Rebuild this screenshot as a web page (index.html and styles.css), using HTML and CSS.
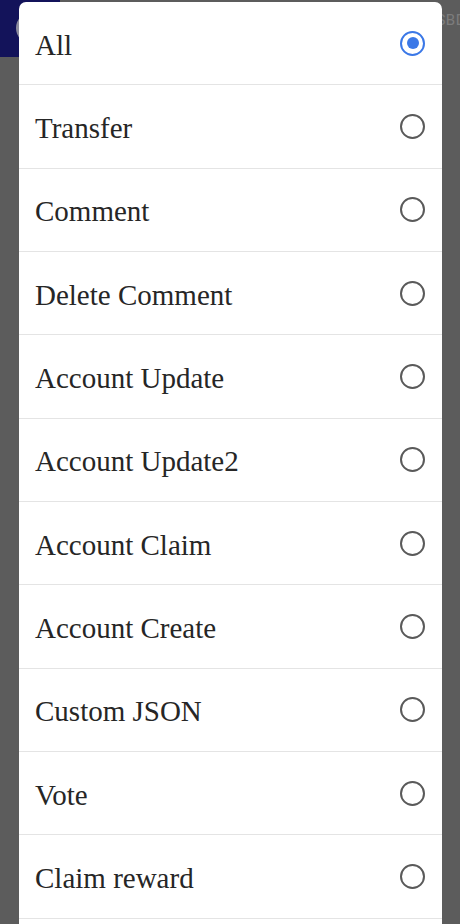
FILE: index.html
```html
<!DOCTYPE html>
<html>
<head>
<meta charset="utf-8">
<link rel="stylesheet" href="styles.css">
</head>
<body>
<header class="appbar">
  <div class="brand"><span class="avatar"></span></div>
  <span class="bal">SBD</span>
</header>
<div class="dialog">
  <div class="row"><span class="label">All</span><span class="radio on"></span></div>
  <div class="row"><span class="label">Transfer</span><span class="radio"></span></div>
  <div class="row"><span class="label">Comment</span><span class="radio"></span></div>
  <div class="row"><span class="label">Delete Comment</span><span class="radio"></span></div>
  <div class="row"><span class="label">Account Update</span><span class="radio"></span></div>
  <div class="row"><span class="label">Account Update2</span><span class="radio"></span></div>
  <div class="row"><span class="label">Account Claim</span><span class="radio"></span></div>
  <div class="row"><span class="label">Account Create</span><span class="radio"></span></div>
  <div class="row"><span class="label">Custom JSON</span><span class="radio"></span></div>
  <div class="row"><span class="label">Vote</span><span class="radio"></span></div>
  <div class="row"><span class="label">Claim reward</span><span class="radio"></span></div>
  <div class="spacer"></div>
</div>
</body>
</html>
```
FILE: styles.css
```css
html, body {
  margin: 0;
  padding: 0;
  width: 460px;
  height: 924px;
  overflow: hidden;
  background: #5c5c5c;
}
.appbar {
  height: 57px;
  display: flex;
  justify-content: space-between;
  align-items: flex-start;
  background: #5c5c5c;
}
.brand {
  width: 60px;
  height: 57px;
  background: #13135a;
  position: relative;
}
.avatar {
  position: absolute;
  left: 16px;
  top: 12px;
  width: 32px;
  height: 32px;
  border-radius: 50%;
  background: #8c8c9c;
}
.bal {
  font-family: "Roboto", "Liberation Sans", sans-serif;
  font-size: 15px;
  color: #7c7c7c;
  margin-top: 11px;
  margin-right: -6px;
  letter-spacing: 0.5px;
}
.dialog {
  position: absolute;
  left: 19px;
  top: 2px;
  width: 423px;
  background: #ffffff;
  border-radius: 7px 7px 0 0;
}
.row {
  box-sizing: border-box;
  height: 83.33px;
  border-bottom: 1px solid #e4e4e4;
  display: flex;
  align-items: center;
  justify-content: space-between;
  padding: 0 17px 0 16px;
}
.spacer {
  height: 20px;
}
.label {
  font-family: "Liberation Serif", "Times New Roman", serif;
  font-size: 29px;
  color: #262626;
  padding-top: 4px;
}
.radio {
  box-sizing: border-box;
  width: 25px;
  height: 25px;
  border-radius: 50%;
  border: 2.5px solid #5a5a5a;
  display: flex;
  align-items: center;
  justify-content: center;
}
.radio.on {
  border-color: #3b78e7;
}
.radio.on::after {
  content: "";
  width: 12px;
  height: 12px;
  border-radius: 50%;
  background: #3b78e7;
}
```
